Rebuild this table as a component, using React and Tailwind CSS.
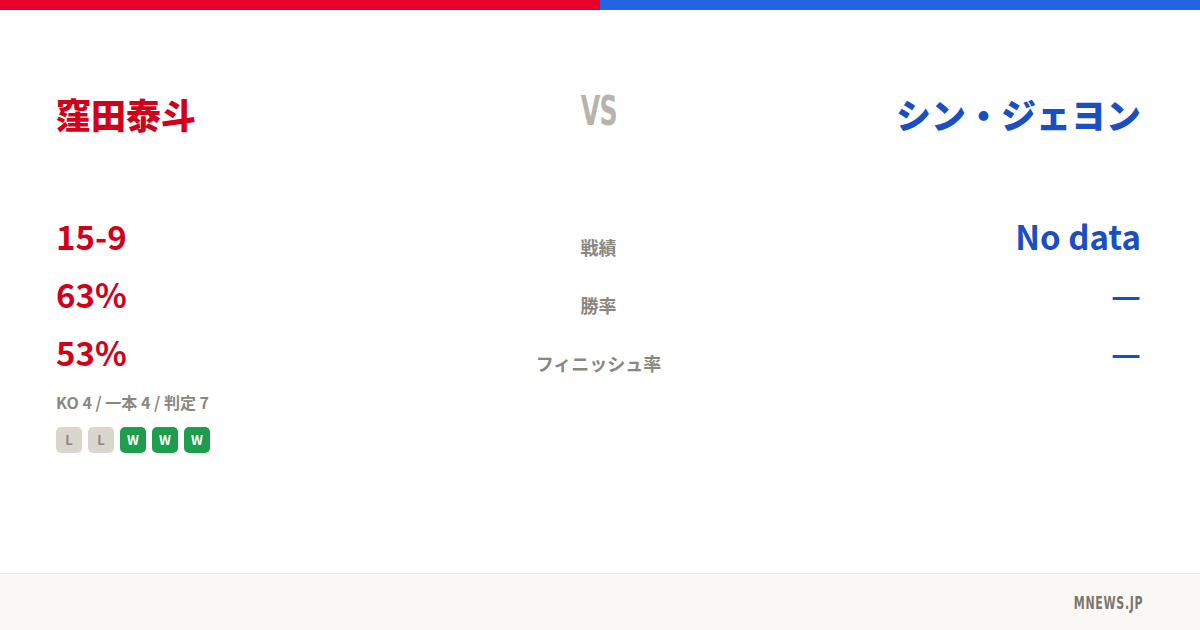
const red = "text-[#d0021b]";
const blue = "text-[#1a4fc4]";

const rows = [
  { label: "戦績", left: "15-9", right: "No data" },
  { label: "勝率", left: "63%", right: "—" },
  { label: "フィニッシュ率", left: "53%", right: "—" },
];

const form = ["L", "L", "W", "W", "W"];

export default function App() {
  return (
    <div
      className="w-[1200px] h-[630px] bg-white flex flex-col overflow-hidden"
      style={{ fontFamily: '"Noto Sans CJK JP", "Noto Sans", sans-serif' }}
    >
      <div className="flex h-[10px]">
        <div className="flex-1 bg-[#e8002a]" />
        <div className="flex-1 bg-[#2563e0]" />
      </div>

      <div className="flex-1 pl-14 pr-[59px]">
        {/* names */}
        <div className="grid grid-cols-3 items-center mt-[80px] h-[46px]">
          <div className={`text-[35px] font-black leading-none ${red}`}>窪田泰斗</div>
          <div
            className="text-center text-[40px] font-bold leading-none text-[#b8b4aa] tracking-tight -mt-[4px]"
            style={{ fontFamily: '"DejaVu Sans Condensed", sans-serif' }}
          >
            <span className="inline-block scale-x-[0.7]">VS</span>
          </div>
          <div className={`text-right text-[35px] font-black leading-none ${blue}`}>シン・ジェヨン</div>
        </div>

        {/* stats */}
        <div className="mt-[81px] flex flex-col gap-[22px]">
          {rows.map((r) => (
            <div key={r.label} className="grid grid-cols-3 items-end h-[36px]">
              <div className={`text-[33px] font-bold leading-none ${red}`}>{r.left}</div>
              <div className="text-center text-[18px] font-bold leading-none text-[#8a877f] -mb-[3px]">{r.label}</div>
              <div className={`text-right text-[33px] font-bold leading-none ${blue}`}>{r.right}</div>
            </div>
          ))}
        </div>

        <div className="mt-[25px] text-[16px] font-bold text-[#8a877f] leading-none">KO 4 / 一本 4 / 判定 7</div>

        <div className="flex gap-[6px] mt-[17px]">
          {form.map((f, i) => (
            <div
              key={i}
              className={`w-[26px] h-[26px] rounded-[5px] flex items-center justify-center text-[13px] font-bold ${
                f === "W" ? "bg-[#1f9d4e] text-white" : "bg-[#dad6cd] text-[#8a877f]"
              }`}
            >
              {f}
            </div>
          ))}
        </div>
      </div>

      <div className="h-[57px] bg-[#f9f8f4] border-t border-[#ebe8e1] flex items-center justify-end pr-[57px]">
        <span
          className="text-[18px] font-bold text-[#7a776f] tracking-[1px] inline-block scale-x-[0.68] origin-right"
          style={{ fontFamily: '"DejaVu Sans Condensed", sans-serif' }}
        >
          MNEWS.JP
        </span>
      </div>
    </div>
  );
}
